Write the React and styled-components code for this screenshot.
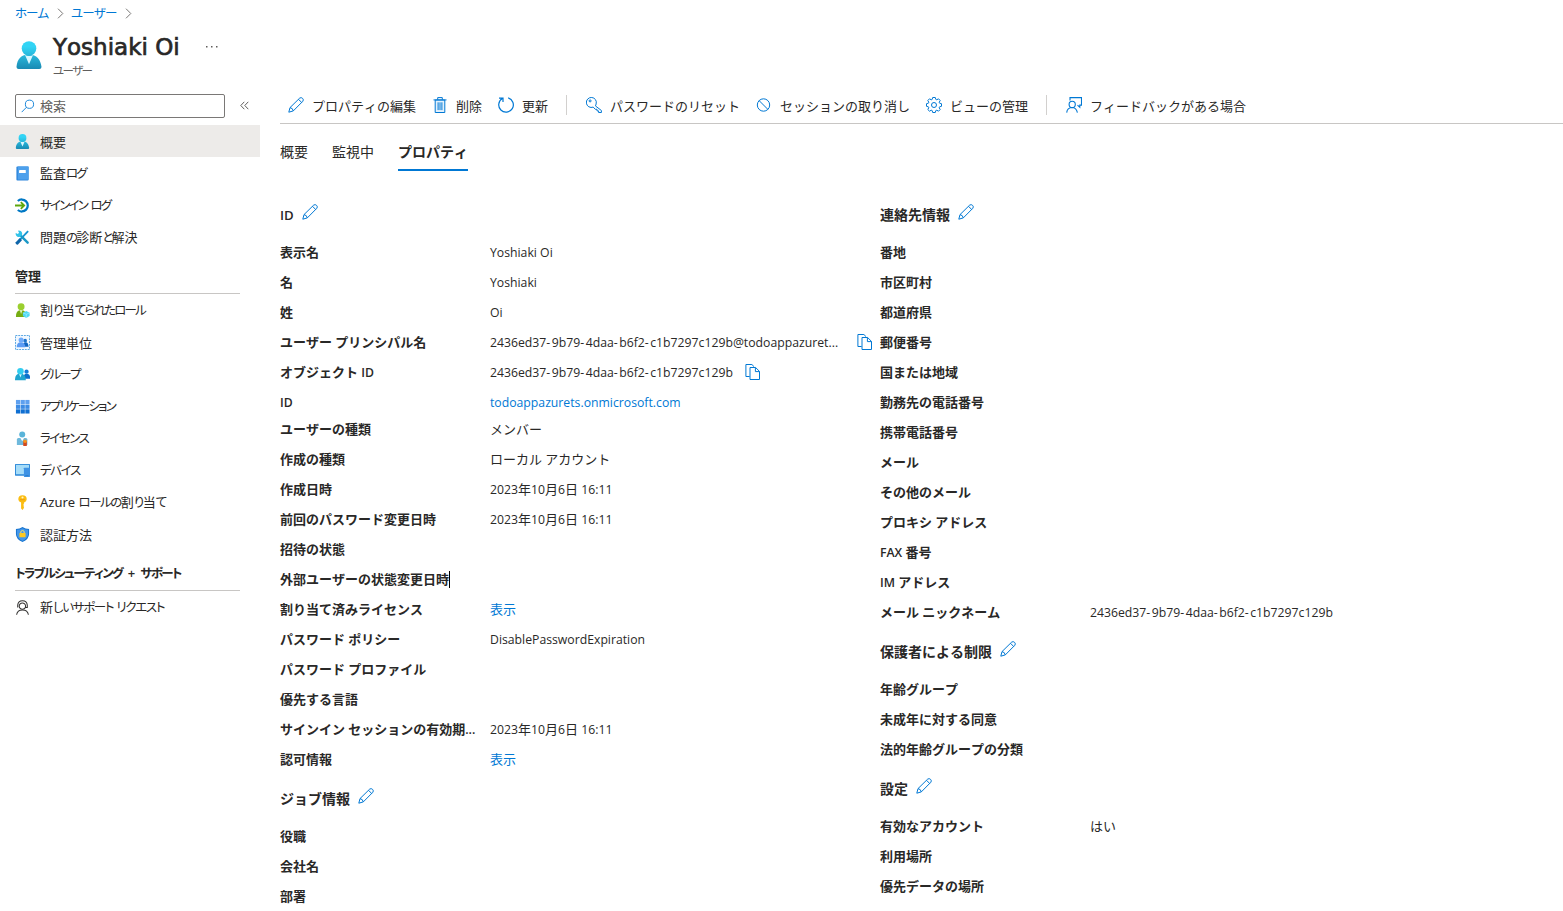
import React from "react";
import styled, { createGlobalStyle } from "styled-components";

const GlobalStyle = createGlobalStyle`
    * {
        box-sizing: border-box;
    }
    body {
        margin: 0;
        background: #fff;
        color: #292827;
        font-family: "Open Sans", "Noto Sans CJK JP", sans-serif;
        font-size: 13px;
        font-kerning: none;
        overflow: hidden;
    }
    svg {
        display: block;
        flex: none;
    }
`;

const Page = styled.div`
    width: 1563px;
    height: 911px;
    overflow: hidden;
`;

const Latin = styled.span`
    font-size: 0.942em;
`;

const Hyphen = styled.span`
    letter-spacing: 1.5px;
`;

const Kana = styled.span`
    font-size: 0.962em;
    font-feature-settings: "palt";
    letter-spacing: ${({ $track }) => $track}px;
`;

/* latin runs are set a little smaller than the japanese around them */
const Mixed = ({ children }) =>
    children.split(/([\x20-\x7e]+)/).map((run, i) =>
        i % 2 ? (
            <Latin key={i}>
                {run
                    .split(/(-)/)
                    .map((part, j) => (j % 2 ? <Hyphen key={j}>{part}</Hyphen> : part))}
            </Latin>
        ) : (
            run
        )
    );

/* condensed kana for the navigation texts */
const Narrow = ({ children, track = -1.8 }) =>
    children.split(/([\u3040-\u30ff]+)/).map((run, i) =>
        i % 2 ? (
            <Kana key={i} $track={track}>
                {run}
            </Kana>
        ) : (
            run
        )
    );

const Breadcrumb = styled.nav`
    display: flex;
    align-items: center;
    height: 26px;
    padding: 0 0 2px 15px;
    color: #0078d4;
    white-space: nowrap;
    svg {
        margin: 2px 7px 0 8px;
    }
    span.crumb {
        min-width: 34px;
    }
`;

const Header = styled.header`
    display: flex;
    height: 62px;
    padding-left: 15px;
    .avatar {
        margin-top: 15px;
    }
    .more {
        margin: 20px 0 0 25px;
    }
`;

const TitleBlock = styled.div`
    width: 128px;
    margin-left: 10px;
    h1 {
        margin: 5px 0 0;
        font-family: "DejaVu Sans", sans-serif;
        font-weight: 400;
        font-size: 23px;
        line-height: 32px;
        -webkit-text-stroke: 0.7px #292827;
        white-space: nowrap;
    }
    p {
        margin: 1px 0 0;
        font-size: 12px;
        line-height: 14px;
        color: #605e5c;
    }
`;

const Body = styled.div`
    display: flex;
    height: 823px;
`;

const Sidebar = styled.aside`
    width: 260px;
    margin-right: 20px;
    flex: none;
`;

const SearchRow = styled.div`
    display: flex;
    align-items: center;
    height: 37px;
    padding: 0 0 2px 15px;
    gap: 15px;
`;

const SearchBox = styled.div`
    display: flex;
    align-items: center;
    width: 210px;
    height: 24px;
    padding-left: 5px;
    gap: 5px;
    border: 1px solid #7a7876;
    border-radius: 2px;
    color: #605e5c;
    line-height: 20px;
`;

const NavItem = styled.div`
    display: flex;
    align-items: center;
    height: 32px;
    padding-left: 15px;
    gap: 10px;
    line-height: 20px;
    white-space: pre;
    background: ${({ $active }) => ($active ? "#edebe9" : "transparent")};
    font-family: "Noto Sans", "Noto Sans CJK JP", sans-serif;
    svg {
        margin-top: 1px;
    }
    span.text {
        padding-top: 1px;
    }
`;

const NavHeading = styled.h2`
    height: 41px;
    margin: 0 20px 0 15px;
    padding-top: 13px;
    border-bottom: 1px solid #c8c6c4;
    font-size: 13px;
    font-weight: 600;
    line-height: 20px;
    word-spacing: 2px;
    white-space: pre;
`;

const Main = styled.main`
    flex: 1;
    min-width: 0;
`;

const Toolbar = styled.div`
    display: flex;
    align-items: center;
    height: 36px;
    border-bottom: 1px solid #c8c6c4;
`;

const ToolButton = styled.div`
    display: flex;
    align-items: center;
    padding: 0 8px;
    gap: 8px;
    line-height: 20px;
    white-space: nowrap;
    svg {
        margin-bottom: 2px;
    }
`;

const Separator = styled.div`
    width: 1px;
    height: 20px;
    margin: 0 11px 2px 10px;
    background: #d2d0ce;
`;

const Tabs = styled.div`
    display: flex;
    gap: 24px;
    height: 47px;
    padding-top: 11px;
`;

const Tab = styled.div`
    height: 36px;
    font-size: 14px;
    line-height: 34px;
    font-weight: ${({ $active }) => ($active ? 600 : 400)};
    border-bottom: 2px solid
        ${({ $active }) => ($active ? "#0078d4" : "transparent")};
`;

const Columns = styled.div`
    display: flex;
    padding-top: 27px;
`;

const Column = styled.div`
    width: 600px;
`;

const SectionTitle = styled.h3`
    display: flex;
    align-items: center;
    height: 32px;
    margin: 0 0 7px;
    padding-top: 1px;
    gap: 8px;
    font-size: 14px;
    font-weight: 600;
    line-height: 20px;
    svg {
        margin-bottom: 5px;
    }
`;

const Section = styled.section`
    margin-bottom: 8px;
`;

const Row = styled.div`
    display: flex;
    height: ${({ $short }) => ($short ? 27 : 30)}px;
    line-height: 30px;
    white-space: nowrap;
`;

const Label = styled.div`
    width: 210px;
    flex: none;
    font-weight: 600;
`;

const Value = styled.div`
    display: flex;
    gap: ${({ $gap }) => $gap || 12}px;
    color: ${({ $link }) => ($link ? "#0078d4" : "inherit")};
    svg {
        margin-top: 7px;
    }
`;

const Caret = styled.i`
    display: inline-block;
    width: 1px;
    height: 17px;
    background: #000;
    vertical-align: -4px;
`;

const Line = ({ size = 16, children, color = "#0078d4", ...rest }) => (
    <svg
        width={size}
        height={size}
        viewBox="0 0 16 16"
        fill="none"
        stroke={color}
        strokeWidth="1"
        {...rest}
    >
        {children}
    </svg>
);

const Chevron = () => (
    <svg width="7" height="11" viewBox="0 0 7 11" fill="none" stroke="#797775">
        <path d="M1 .7 5.8 5.5 1 10.3" />
    </svg>
);

const Pencil = (props) => (
    <Line {...props}>
        <path d="M.8 15.2 2 10.6 11.7 1.1Q13.2 0 14.6 1.4 16 2.8 14.8 4.3L5.3 13.9ZM2 10.6Q4.8 11 5.3 13.9M10.5 2.3 13.7 5.5" />
    </Line>
);

const Trash = () => (
    <Line>
        <path d="M3.2 3h9.6v12.5H3.2Z" fill="#e3f1fc" />
        <path d="M1.5 2.9h13M5.7 2.7V.6h4.6v2.1M6.1 5.3v7.8M8 5.3v7.8M9.9 5.3v7.8" />
    </Line>
);

const Refresh = () => (
    <Line strokeWidth="1.2">
        <path d="M10.2.9A7.3 7.3 0 1 1 4.3 1.6M1 1.1h4v4" />
    </Line>
);

const Key = () => (
    <Line>
        <path d="M9.4 8.9 15.4 13.5V15.5H12.6V13.9H11V12.3H9.3L7.2 10.1A5 5 0 1 1 10.1 7Q9.9 8.2 9.4 8.9Z" />
        <circle cx="4.1" cy="3.9" r="1" />
    </Line>
);

const Block = () => (
    <Line>
        <circle cx="7.5" cy="8" r="6.2" />
        <path d="m3.2 3.7 8.6 8.6" />
    </Line>
);

const Gear = () => (
    <Line>
        <circle cx="8" cy="8" r="2.5" />
        <path d="m6.7.5-.5 1.9-1 .4-1.7-1L1.8 3.5l1 1.7-.4 1L.5 6.7v2.6l1.9.5.4 1-1 1.7 1.7 1.7 1.7-1 1 .4.5 1.9h2.6l.5-1.9 1-.4 1.7 1 1.7-1.7-1-1.7.4-1 1.9-.5V6.7l-1.9-.5-.4-1 1-1.7-1.7-1.7-1.7 1-1-.4L9.3.5Z" />
    </Line>
);

const Feedback = () => (
    <Line strokeWidth="1.1">
        <path d="M4 3.5V.6h11.5v7.5h-1.7v2.2l-2.3-2.2" />
        <circle cx="6.2" cy="7.4" r="3.1" />
        <path d="M.7 15.6Q1.2 10.6 6.2 10.5 10.4 10.6 11.4 15.6" />
    </Line>
);

const Copy = () => (
    <Line>
        <path d="M4.6 12.5H.9V.5h6l2.2 2.2M5 3.5h5.6l3.9 3.9v8.1H5ZM10.4 3.6v4h4" />
    </Line>
);

const Search = () => (
    <Line size={14}>
        <circle cx="9.7" cy="6" r="4.7" />
        <path d="M6.3 9.4.8 15" />
    </Line>
);

const Collapse = () => (
    <svg width="9" height="9" viewBox="0 0 9 9" fill="none" stroke="#605e5c">
        <path d="M4.3.8.8 4.5l3.5 3.7M8.3.8 4.8 4.5l3.5 3.7" />
    </svg>
);

const Icon = ({ children }) => (
    <svg width="15" height="15" viewBox="0 0 16 16">
        {children}
    </svg>
);

const UserShape = ({ id, from = "#32d4f5", to = "#198ab3", size = 15, className }) => (
    <svg width={size} height={size} viewBox="0 0 18 18" className={className}>
        <defs>
            <linearGradient id={id} x1="0" y1="0" x2="0" y2="18" gradientUnits="userSpaceOnUse">
                <stop offset=".2" stopColor={from} />
                <stop offset="1" stopColor={to} />
            </linearGradient>
        </defs>
        <path
            d="M15.6 18a1.4 1.4 0 0 0 1.4-1.6C16.5 12.1 14 8.6 9 8.6S1.4 11.6 1 16.4A1.4 1.4 0 0 0 2.3 18Z"
            fill={`url(#${id})`}
        />
        <path d="M9 9.7a5 5 0 0 1-2.6-.8L9 15l2.6-6A5 5 0 0 1 9 9.7Z" fill="#d9f7ff" />
        <circle cx="9" cy="4.8" r="4.7" fill={`url(#${id})`} />
    </svg>
);

const Book = () => (
    <Icon>
        <rect x="1.5" y=".5" width="13" height="15" rx="1" fill="#2e86dc" />
        <path d="M3 .5h11.5v14H3Z" fill="#4da0ec" />
        <rect x="4.3" y="4.3" width="7.2" height="3.2" rx=".4" fill="#fff" />
    </Icon>
);

const SignIn = () => (
    <Icon>
        <path d="M3 3.2A6.4 6.4 0 1 1 3 12.8" fill="none" stroke="#0078c4" strokeWidth="2.4" />
        <path d="M0 8h9.6M6.2 4.5 9.8 8l-3.6 3.5" fill="none" stroke="#5ea70c" strokeWidth="1.9" />
    </Icon>
);

const Tools = () => (
    <Icon>
        <path d="M14 1.2 4.6 11" stroke="#1595d3" strokeWidth="2" />
        <path d="m5.2 8.6 2.2 2.2-4.2 4.6q-1 .6-2-.4t-.4-2Z" fill="#0f65a9" />
        <path d="m5 5 8.5 8.500" stroke="#1b98c6" strokeWidth="2.6" strokeLinecap="round" />
        <path d="M3.200.7a3.500 3.500 0 1 1-2.400 2.500l2.300 1 1.200-1.200Z" fill="#32c3e8" />
    </Icon>
);

const RoleUser = () => (
    <Icon>
        <path d="M1 15Q.8 7.5 6.5 7.5T12 15Z" fill="#76ad13" />
        <path d="M5 7.5h3l-1.5 4.3Z" fill="#e2f3be" />
        <circle cx="6.5" cy="4" r="3.7" fill="#9bcf2f" />
        <path d="m12 8.5 3.6 2v3.3L12 16l-3.6-2.200v-3.300Z" fill="#50d9f5" />
        <path d="m12 12 3.6-1.5M12 12v4M12 12l-3.6-1.5" stroke="#b8f4ff" strokeWidth=".6" />
    </Icon>
);

const AdminUnit = () => (
    <Icon>
        <rect x=".5" y=".5" width="15" height="15" fill="#f1f8ff" stroke="#4da0e0" strokeDasharray="2 1" />
        <path d="M8.5 12.5q0-4.7 2.8-4.7t3.2 4.7Z" fill="#0f65c0" />
        <circle cx="10.8" cy="6" r="2" fill="#1f75cc" />
        <path d="M1.8 13q0-5.3 4.5-5.3T11 13Z" fill="#5b9cf4" />
        <circle cx="6.5" cy="5.4" r="2.7" fill="#6fabfa" />
    </Icon>
);

const Group = () => (
    <Icon>
        <path d="M9 12.5Q8.500 7.300 12.500 7.300T16 12.500Z" fill="#0b6fca" />
        <circle cx="12.3" cy="5" r="2.3" fill="#0f7bd8" />
        <path d="M0 14.2Q-.2 7 5.700 7t5.900 7.200Z" fill="#1fa5cf" />
        <path d="M4.3 7.2h3l-1.500 4Z" fill="#d9f7ff" />
        <circle cx="5.8" cy="4.5" r="3.5" fill="#32cdf0" />
    </Icon>
);

const Apps = () => (
    <Icon>
        {["#5ea0ef", "#3c8be4", "#0f6fd2"].map((fill, row) =>
            [1, 6, 11].map((x) => (
                <rect key={x + fill} x={x} y={1 + row * 5} width="4.5" height="4.5" fill={fill} />
            ))
        )}
    </Icon>
);

const License = () => (
    <Icon>
        <path d="M2 15V9q0-1.6 1.6-1.6h8q1.6 0 1.6 1.6v6Z" fill="#6fb9dc" />
        <path d="M5.7 7.4h4L7.7 11Z" fill="#fff" />
        <circle cx="7.7" cy="3.6" r="3.2" fill="#59b4d9" />
        <path d="M8.8 10.5h3.8V16H8.8Z" fill="#d2481e" />
        <circle cx="10.7" cy="11" r="1.9" fill="#f7941d" />
    </Icon>
);

const Device = () => (
    <Icon>
        <rect x="0" y="1" width="16" height="12.5" rx=".6" fill="#2b87d8" />
        <rect x="1" y="2" width="14" height="10" fill="#a5dcf8" />
        <rect x="9.5" y="5" width="6.5" height="10" rx=".5" fill="#3e92e4" />
        <path d="M11 13.5h3.5" stroke="#257bca" />
    </Icon>
);

const GoldKey = () => (
    <Icon>
        <path d="M8 .3q4.5 0 4.5 4.2Q12.4 7 9.7 8v1l-1 .8 1 .9-1 .9 1 .9-.5 2L8 15.9 6.5 14.5V8Q3.500 7 3.500 4.500 3.600.3 8 .3Z" fill="#fbbd12" />
        <circle cx="8" cy="2.6" r="1.1" fill="#fff4ca" />
        <path d="M5.5 5h5" stroke="#ee9a0b" />
    </Icon>
);

const Shield = () => (
    <Icon>
        <path d="M8 0q3 2 7 2v5.5Q15 13 8 16 1 13 1 7.5V2q4 0 7-2Z" fill="#1674cf" />
        <path d="M8 1.2q2.7 1.6 6 1.8v4.5q0 4.5-6 7.3-6-2.8-6-7.300V3q3.300-.2 6-1.800Z" fill="#4597e9" />
        <path d="M6.2 7V5.3Q6.300 3.800 8 3.800t1.800 1.500V7" fill="none" stroke="#ffe26a" />
        <rect x="4.7" y="6.5" width="6.6" height="4.5" rx=".5" fill="#ffc91f" />
    </Icon>
);

const Support = () => (
    <Line size={15} color="#323130" strokeWidth="1.1">
        <path d="M2.9 8V5.5Q3.3.8 8 .8t5.1 4.7V8h-2q-.8 1.900-3.100 1.900A3.400 3.400 0 1 1 11.300 6.500L11 8" />
        <path d="M1.7 15.7Q2.5 10.7 8 10.7t6.3 5" />
    </Line>
);

const topNav = [
    { text: "概要", icon: <UserShape id="nav-user" />, active: true },
    { text: "監査ログ", icon: <Book />, track: -2 },
    { text: "サインイン ログ", icon: <SignIn /> },
    { text: "問題の診断と解決", icon: <Tools /> },
];

const manageNav = [
    { text: "割り当てられたロール", icon: <RoleUser /> },
    { text: "管理単位", icon: <AdminUnit /> },
    { text: "グループ", icon: <Group /> },
    { text: "アプリケーション", icon: <Apps /> },
    { text: "ライセンス", icon: <License />, track: -1.55 },
    { text: "デバイス", icon: <Device />, track: -1.45 },
    { text: "Azure ロールの割り当て", icon: <GoldKey />, track: -1.5 },
    { text: "認証方法", icon: <Shield /> },
];

const supportNav = [
    { text: "新しいサポート リクエスト", icon: <Support />, track: -1.35 },
];

const leftSections = [
    {
        title: "ID",
        rows: [
            { label: "表示名", value: "Yoshiaki Oi" },
            { label: "名", value: "Yoshiaki" },
            { label: "姓", value: "Oi" },
            {
                label: "ユーザー プリンシパル名",
                value: "2436ed37-9b79-4daa-b6f2-c1b7297c129b@todoappazuret...",
                copy: true,
                gap: 19,
            },
            {
                label: "オブジェクト ID",
                value: "2436ed37-9b79-4daa-b6f2-c1b7297c129b",
                copy: true,
            },
            { label: "ID", value: "todoappazurets.onmicrosoft.com", link: true, short: true },
            { label: "ユーザーの種類", value: "メンバー" },
            { label: "作成の種類", value: "ローカル アカウント" },
            { label: "作成日時", value: "2023年10月6日 16:11" },
            { label: "前回のパスワード変更日時", value: "2023年10月6日 16:11" },
            { label: "招待の状態" },
            { label: "外部ユーザーの状態変更日時", caret: true },
            { label: "割り当て済みライセンス", value: "表示", link: true },
            { label: "パスワード ポリシー", value: "DisablePasswordExpiration" },
            { label: "パスワード プロファイル" },
            { label: "優先する言語" },
            { label: "サインイン セッションの有効期...", value: "2023年10月6日 16:11" },
            { label: "認可情報", value: "表示", link: true },
        ],
    },
    {
        title: "ジョブ情報",
        rows: [{ label: "役職" }, { label: "会社名" }, { label: "部署" }],
    },
];

const rightSections = [
    {
        title: "連絡先情報",
        rows: [
            { label: "番地" },
            { label: "市区町村" },
            { label: "都道府県" },
            { label: "郵便番号" },
            { label: "国または地域" },
            { label: "勤務先の電話番号" },
            { label: "携帯電話番号" },
            { label: "メール" },
            { label: "その他のメール" },
            { label: "プロキシ アドレス" },
            { label: "FAX 番号" },
            { label: "IM アドレス" },
            { label: "メール ニックネーム", value: "2436ed37-9b79-4daa-b6f2-c1b7297c129b" },
        ],
    },
    {
        title: "保護者による制限",
        rows: [
            { label: "年齢グループ" },
            { label: "未成年に対する同意" },
            { label: "法的年齢グループの分類" },
        ],
    },
    {
        title: "設定",
        rows: [
            { label: "有効なアカウント", value: "はい" },
            { label: "利用場所" },
            { label: "優先データの場所" },
        ],
    },
];

const NavList = ({ items }) =>
    items.map(({ text, icon, active, track }) => (
        <NavItem key={text} $active={active}>
            {icon}
            <span className="text">
                <Narrow track={track}>{text}</Narrow>
            </span>
        </NavItem>
    ));

const Sections = ({ sections }) => (
    <Column>
        {sections.map(({ title, rows }) => (
            <Section key={title}>
                <SectionTitle>
                    <span>
                        <Mixed>{title}</Mixed>
                    </span>
                    <Pencil />
                </SectionTitle>
                {rows.map(({ label, value, link, copy, gap, short, caret }) => (
                    <Row key={label} $short={short}>
                        <Label>
                            <Mixed>{label}</Mixed>
                            {caret && <Caret />}
                        </Label>
                        {value && (
                            <Value $link={link} $gap={gap}>
                                <span>
                                    <Mixed>{value}</Mixed>
                                </span>
                                {copy && <Copy />}
                            </Value>
                        )}
                    </Row>
                ))}
            </Section>
        ))}
    </Column>
);

const App = () => {
    return (
        <Page>
            <GlobalStyle />
            <Breadcrumb>
                <span className="crumb">
                    <Narrow track={-1}>ホーム</Narrow>
                </span>
                <Chevron />
                <span className="crumb">
                    <Narrow track={-0.8}>ユーザー</Narrow>
                </span>
                <Chevron />
            </Breadcrumb>
            <Header>
                <UserShape id="title-user" size={28} className="avatar" />
                <TitleBlock>
                    <h1>Yoshiaki Oi</h1>
                    <p>
                        <Narrow track={-1.7}>ユーザー</Narrow>
                    </p>
                </TitleBlock>
                <svg className="more" width="12" height="2" fill="#605e5c">
                    <path d="M0 0h1.5v1.5H0ZM5 0h1.5v1.5H5ZM10 0h1.5v1.5H10Z" />
                </svg>
            </Header>
            <Body>
                <Sidebar>
                    <SearchRow>
                        <SearchBox>
                            <Search />
                            検索
                        </SearchBox>
                        <Collapse />
                    </SearchRow>
                    <NavList items={topNav} />
                    <NavHeading>管理</NavHeading>
                    <NavList items={manageNav} />
                    <NavHeading>
                        <Narrow track={-1.6}>トラブルシューティング + サポート</Narrow>
                    </NavHeading>
                    <NavList items={supportNav} />
                </Sidebar>
                <Main>
                    <Toolbar>
                        <ToolButton>
                            <Pencil />
                            プロパティの編集
                        </ToolButton>
                        <ToolButton>
                            <Trash />
                            削除
                        </ToolButton>
                        <ToolButton>
                            <Refresh />
                            更新
                        </ToolButton>
                        <Separator />
                        <ToolButton>
                            <Key />
                            パスワードのリセット
                        </ToolButton>
                        <ToolButton>
                            <Block />
                            セッションの取り消し
                        </ToolButton>
                        <ToolButton>
                            <Gear />
                            ビューの管理
                        </ToolButton>
                        <Separator />
                        <ToolButton>
                            <Feedback />
                            フィードバックがある場合
                        </ToolButton>
                    </Toolbar>
                    <Tabs>
                        <Tab>概要</Tab>
                        <Tab>監視中</Tab>
                        <Tab $active>プロパティ</Tab>
                    </Tabs>
                    <Columns>
                        <Sections sections={leftSections} />
                        <Sections sections={rightSections} />
                    </Columns>
                </Main>
            </Body>
        </Page>
    );
};

export default App;
